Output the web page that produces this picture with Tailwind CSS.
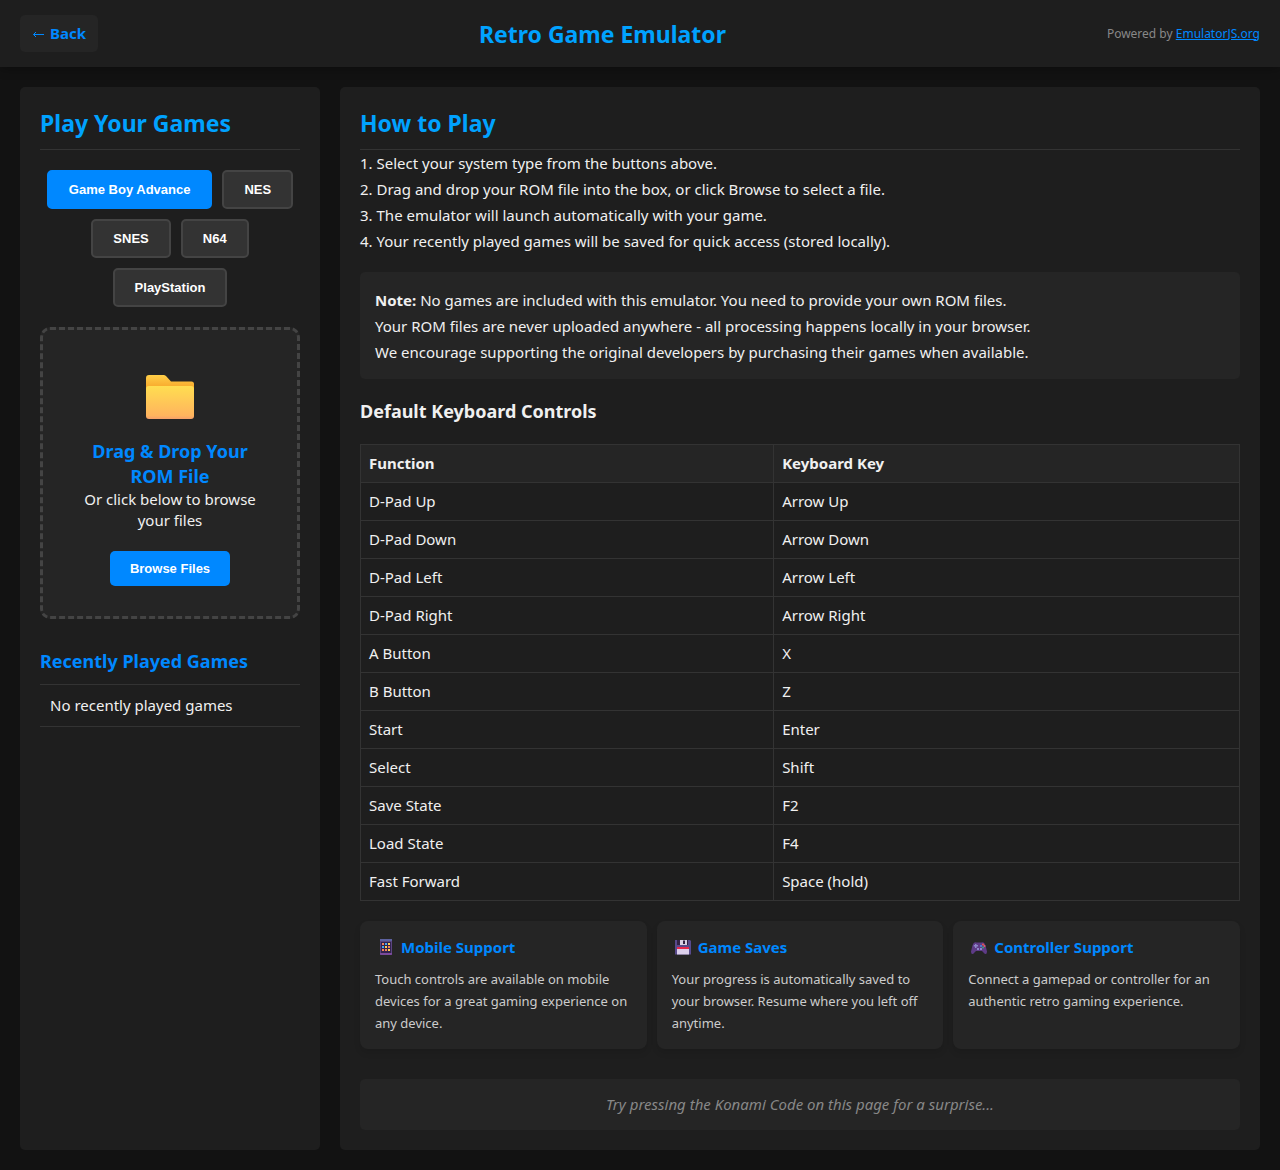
<!DOCTYPE html>
<html lang="en">
<head>
<meta charset="utf-8">
<meta name="viewport" content="width=device-width, initial-scale=1">
<title>Retro Game Emulator</title>
<script src="https://cdn.jsdelivr.net/npm/@tailwindcss/browser@4"></script>
</head>
<body class="flex min-h-screen flex-col bg-[#121212] font-['Segoe_UI','Noto_Sans',sans-serif] text-[15px] leading-[21px] text-[#f0f0f0]">

<header class="flex items-center justify-between bg-[#1e1e1e] px-5 py-[15px] shadow-[0_2px_10px_rgba(0,0,0,0.3)]">
  <a href="#" class="flex h-[37px] items-center gap-1 rounded-[5px] bg-[#252525] px-3 font-bold text-[#0088ff]">
    <svg class="h-3 w-[14px]" viewBox="0 0 14 12" fill="none" stroke="currentColor" aria-hidden="true"><path d="M12 6.500H1.500M4 4L1.500 6.500L4 9"/></svg>
    Back
  </a>
  <h1 class="text-[23px] leading-8 font-bold text-[#00a2ff]">Retro Game Emulator</h1>
  <p class="text-xs text-[#888888]">Powered by <a href="#" class="text-[#0088ff] underline">EmulatorJS.org</a></p>
</header>

<main class="grid grow grid-cols-[300px_minmax(0,1fr)] gap-5 p-5">
  <aside class="rounded-[5px] bg-[#1e1e1e] p-5">
    <h2 class="mb-5 border-b border-[#333333] pb-2.5 text-[23px] leading-8 font-bold text-[#00a2ff]">Play Your Games</h2>

    <div class="mb-5 flex flex-wrap justify-center gap-2.5 font-['Liberation_Sans',Arial,sans-serif] text-[13px] leading-[15px] font-bold text-white">
      <button class="rounded-[5px] border-2 border-[#0088ff] bg-[#0088ff] px-5 py-2.5">Game Boy Advance</button>
      <button class="rounded-[5px] border-2 border-[#444444] bg-[#333333] px-5 py-2.5">NES</button>
      <button class="rounded-[5px] border-2 border-[#444444] bg-[#333333] px-5 py-2.5">SNES</button>
      <button class="rounded-[5px] border-2 border-[#444444] bg-[#333333] px-5 py-2.5">N64</button>
      <button class="rounded-[5px] border-2 border-[#444444] bg-[#333333] px-5 py-2.5">PlayStation</button>
    </div>

    <section class="flex flex-col items-center rounded-[10px] border-3 border-dashed border-[#444444] bg-[#252525] p-[30px] text-center">
      <svg class="mt-3 mb-[19px] h-12 w-12" viewBox="0 0 48 48" aria-hidden="true">
        <defs>
          <linearGradient id="folderBack" x1="0" y1="0" x2="0" y2="1"><stop offset="0" stop-color="#ffcf48"/><stop offset=".4" stop-color="#f9ae30"/></linearGradient>
          <linearGradient id="folderFront" x1="0" y1="0" x2="0" y2="1"><stop offset="0" stop-color="#ffde50"/><stop offset=".9" stop-color="#ffb45e"/><stop offset="1" stop-color="#f6a06a"/></linearGradient>
        </defs>
        <path fill="url(#folderBack)" d="M3 3H17.500Q19 3 20 4L25 9.500H45.500Q48 9.500 48 12V30H0V6Q0 3 3 3Z"/>
        <rect x="0" y="14" width="48" height="33" rx="3" fill="url(#folderFront)"/>
      </svg>
      <h3 class="text-lg leading-[25px] font-bold text-[#0088ff]">Drag &amp; Drop Your ROM File</h3>
      <p>Or click below to browse your files</p>
      <button class="mt-5 rounded-[5px] bg-[#0088ff] px-5 py-2.5 font-['Liberation_Sans',Arial,sans-serif] text-[13px] leading-[15px] font-bold text-white">Browse Files</button>
    </section>

    <h3 class="mt-[30px] border-b border-[#333333] pb-2.5 text-lg leading-[25px] font-bold text-[#0088ff]">Recently Played Games</h3>
    <ul><li class="border-b border-[#333333] p-2.5">No recently played games</li></ul>
  </aside>

  <section class="rounded-[5px] bg-[#1e1e1e] p-5">
    <h2 class="border-b border-[#333333] pb-2.5 text-[23px] leading-8 font-bold text-[#00a2ff]">How to Play</h2>
    <ol class="list-inside list-decimal leading-[26px]">
      <li>Select your system type from the buttons above.</li>
      <li>Drag and drop your ROM file into the box, or click Browse to select a file.</li>
      <li>The emulator will launch automatically with your game.</li>
      <li>Your recently played games will be saved for quick access (stored locally).</li>
    </ol>
    <div class="mt-[18px] rounded-[5px] bg-[#252525] px-[15px] pt-[15px] pb-3.5 leading-[26px]">
      <p><strong>Note:</strong> No games are included with this emulator. You need to provide your own ROM files.</p>
      <p>Your ROM files are never uploaded anywhere - all processing happens locally in your browser.</p>
      <p>We encourage supporting the original developers by purchasing their games when available.</p>
    </div>

    <h3 class="my-5 text-lg leading-[25px] font-bold">Default Keyboard Controls</h3>
    <table class="w-full table-fixed border-collapse text-left [&_td]:border [&_td]:border-[#333333] [&_td]:p-2 [&_th]:border [&_th]:border-[#333333] [&_th]:bg-[#252525] [&_th]:p-2">
      <thead><tr><th class="w-[47%]">Function</th><th>Keyboard Key</th></tr></thead>
      <tbody>
        <tr><td>D-Pad Up</td><td>Arrow Up</td></tr>
        <tr><td>D-Pad Down</td><td>Arrow Down</td></tr>
        <tr><td>D-Pad Left</td><td>Arrow Left</td></tr>
        <tr><td>D-Pad Right</td><td>Arrow Right</td></tr>
        <tr><td>A Button</td><td>X</td></tr>
        <tr><td>B Button</td><td>Z</td></tr>
        <tr><td>Start</td><td>Enter</td></tr>
        <tr><td>Select</td><td>Shift</td></tr>
        <tr><td>Save State</td><td>F2</td></tr>
        <tr><td>Load State</td><td>F4</td></tr>
        <tr><td>Fast Forward</td><td>Space (hold)</td></tr>
      </tbody>
    </table>

    <div class="mt-5 grid grid-cols-3 gap-2.5">
      <article class="rounded-lg bg-[#252525] p-[15px] shadow-[0_4px_6px_rgba(0,0,0,0.1)]">
        <h4 class="mb-2.5 flex items-center gap-[7px] leading-[22px] font-bold text-[#0088ff]">
          <svg class="ml-[3px] h-4 w-4" viewBox="0 0 16 16" aria-hidden="true">
            <rect x="2" y="0" width="12" height="16" rx="1" fill="#5b4480"/><rect x="2" y="0" width="12" height="2" fill="#5d62a0"/><rect x="3" y="3" width="10" height="11" fill="#33234d"/><path fill="#7b4a9c" d="M2 14h12v1q0 1-1 1H3q-1 0-1-1z"/>
            <path fill="#f5825c" d="M4 4h2v2H4zM10 7h2v2h-2zM4 10h2v2H4zM7 10h2v2H7z"/><path fill="#48a8f0" d="M7 4h2v2H7zM4 7h2v2H4z"/><path fill="#ffd34e" d="M10 4h2v2h-2zM7 7h2v2H7zM10 10h2v2h-2z"/>
          </svg>
          Mobile Support
        </h4>
        <p class="text-[13px] leading-[22px] text-[#cccccc]">Touch controls are available on mobile devices for a great gaming experience on any device.</p>
      </article>
      <article class="rounded-lg bg-[#252525] p-[15px] shadow-[0_4px_6px_rgba(0,0,0,0.1)]">
        <h4 class="mb-2.5 flex items-center gap-[7px] leading-[22px] font-bold text-[#0088ff]">
          <svg class="ml-[3px] h-4 w-4" viewBox="0 0 16 16" aria-hidden="true">
            <path fill="#584a8c" d="M0 1H15L16 2V15.500H0Z"/><path fill="#322344" d="M2 1H13V6H2Z"/><path fill="#d8d0e4" d="M5 1H12V6H5Z"/><path fill="#322344" d="M8 1.500H10V5H8Z"/><path fill="#ddd0ec" d="M2 8H14V15.500H2Z"/><path fill="#e8274b" d="M2 8H14V10H2Z"/>
          </svg>
          Game Saves
        </h4>
        <p class="text-[13px] leading-[22px] text-[#cccccc]">Your progress is automatically saved to your browser. Resume where you left off anytime.</p>
      </article>
      <article class="rounded-lg bg-[#252525] p-[15px] shadow-[0_4px_6px_rgba(0,0,0,0.1)]">
        <h4 class="mb-2.5 flex items-center gap-[7px] leading-[22px] font-bold text-[#0088ff]">
          <svg class="ml-[3px] h-4 w-4" viewBox="0 0 16 16" aria-hidden="true">
            <path fill="#5e3b86" d="M3.500 3.500Q4.500 2.800 5.500 3.500H10.500Q11.500 2.800 12.500 3.500Q14 4 14.800 7.500L16 12.500Q16 15.500 14 15L11 12H5L2 15Q0 15.500 0 12.500L1.200 7.500Q2 4 3.500 3.500Z"/>
            <path fill="#8d86c8" d="M4 5h1.500v1H7v1.500H5.500V9H4V7.500H2.800V6H4zM6 9h2v2H6zM9 9h2v2H9z"/><circle cx="12" cy="5.500" r="1" fill="#ef5350"/><circle cx="10" cy="7" r="1" fill="#4a90e8"/><circle cx="13.500" cy="7" r="1" fill="#e8655f"/><circle cx="12" cy="8.500" r="1" fill="#3ba77b"/>
          </svg>
          Controller Support
        </h4>
        <p class="text-[13px] leading-[22px] text-[#cccccc]">Connect a gamepad or controller for an authentic retro gaming experience.</p>
      </article>
    </div>

    <p class="mt-[30px] rounded-[5px] bg-[#252525] p-[15px] text-center text-[#888888] italic">Try pressing the Konami Code on this page for a surprise...</p>
  </section>
</main>
</body>
</html>
